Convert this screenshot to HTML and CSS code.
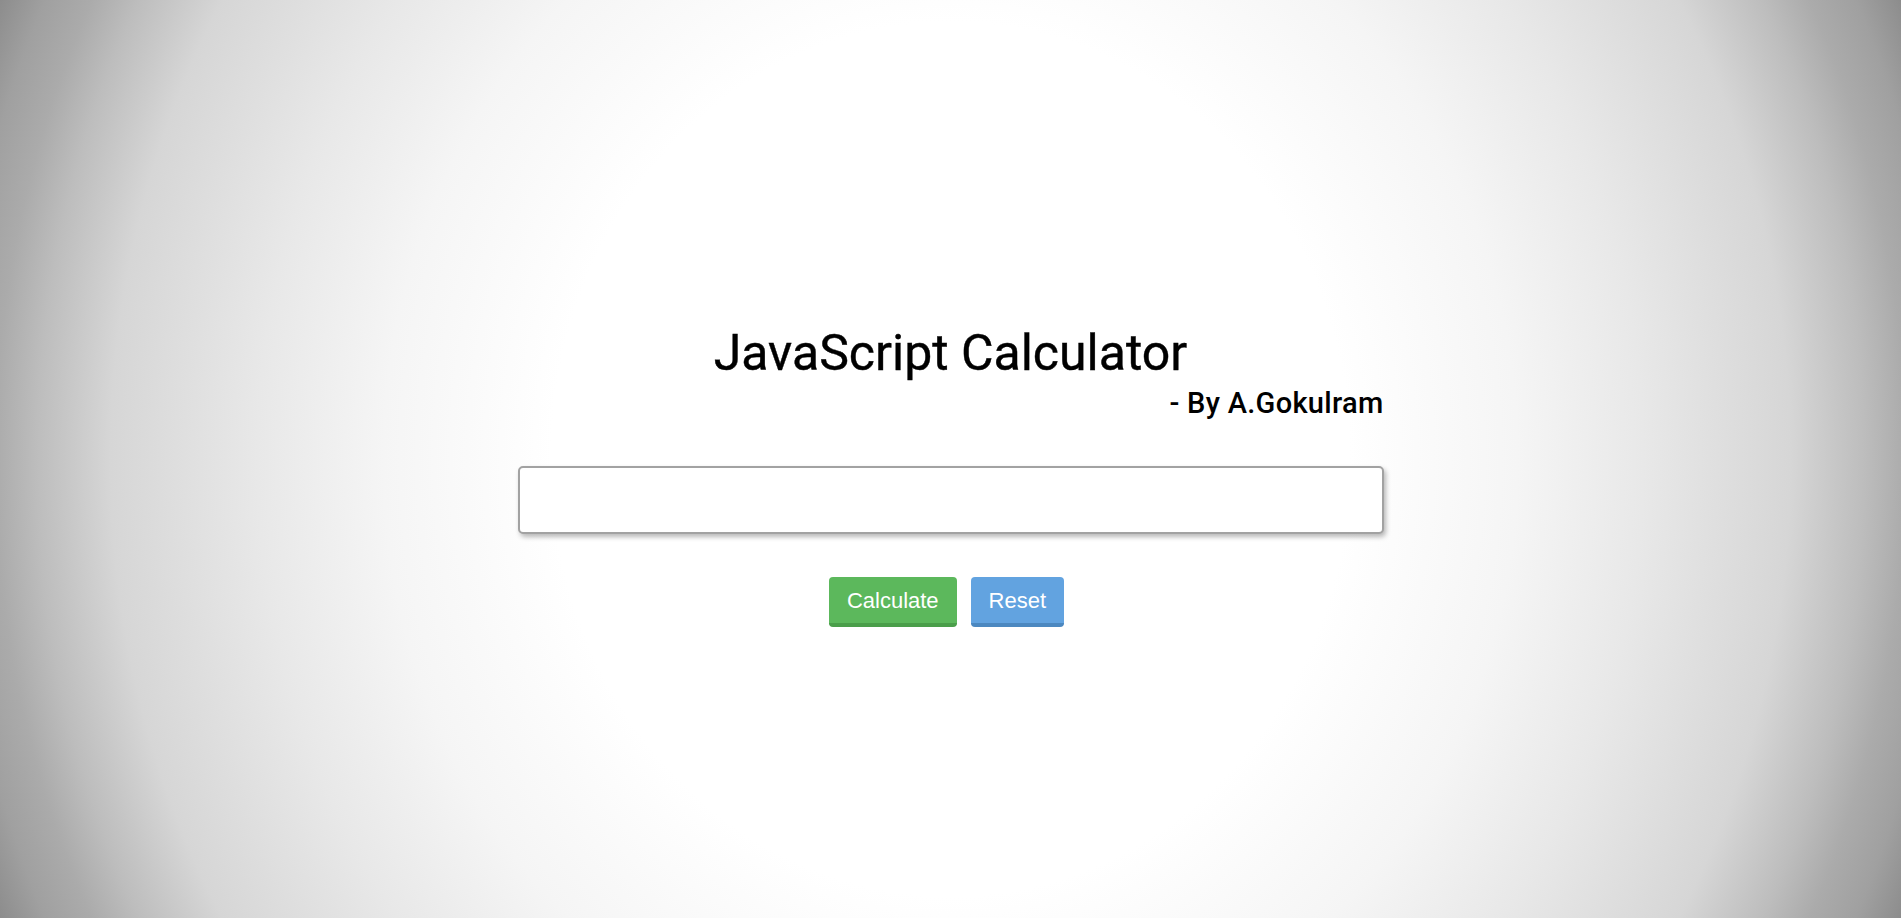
FILE: index.html
```html
<!DOCTYPE html>
<html lang="en">
<head>
<meta charset="utf-8">
<title>JavaScript Calculator</title>
<link rel="stylesheet" href="styles.css">
</head>
<body>
<main class="calc">
  <h1 class="title">JavaScript Calculator</h1>
  <p class="author">- By A.Gokulram</p>
  <input class="display" type="text">
  <div class="actions">
    <button class="btn btn-calc" type="button">Calculate</button>
    <button class="btn btn-reset" type="button">Reset</button>
  </div>
</main>
</body>
</html>
```
FILE: styles.css
```css
html, body {
  margin: 0;
  padding: 0;
  height: 100%;
}
body {
  background: radial-gradient(ellipse 1050px 1150px at 50% 50%,
    #ffffff 0%, #ffffff 38%, #f5f5f5 54%, #e8e8e8 66%, #d6d6d6 80%, #bdbdbd 87%, #ababab 91%, #a0a0a0 95%, #8c8c8c 99%);
  font-family: Roboto, "Liberation Sans", Arial, sans-serif;
  color: #000;
}
.calc {
  width: 866px;
  margin: 0 auto;
  padding-top: 323px;
  display: flex;
  flex-direction: column;
}
.title {
  margin: 0;
  font-weight: 400;
  font-size: 50px;
  line-height: 60px;
  text-align: center;
  -webkit-text-stroke: 0.4px #000;
}
.author {
  margin: 4px 0 0;
  font-size: 29px;
  font-weight: 500;
  letter-spacing: 0.3px;
  line-height: 32px;
  text-align: right;
}
.display {
  margin: 47px 0 0;
  box-sizing: border-box;
  width: 866px;
  height: 68px;
  border: 2px solid #a2a2a2;
  border-radius: 5px;
  background: #fff;
  box-shadow: 2px 3px 5px rgba(0, 0, 0, 0.28);
  outline: none;
  font-size: 24px;
}
.actions {
  margin-top: 43px;
  display: flex;
  justify-content: center;
  gap: 14px;
  padding-right: 8px;
}
.btn {
  font-family: "Liberation Sans", Arial, sans-serif;
  font-size: 22px;
  line-height: 25px;
  color: #fff;
  border: 0;
  border-radius: 4px;
  padding: 11px 18px 10px;
  cursor: pointer;
}
.btn-calc {
  background: #5cb85c;
  border-bottom: 4px solid #4a9e4a;
}
.btn-reset {
  background: #62a3e0;
  border-bottom: 4px solid #4c88c0;
}
```
